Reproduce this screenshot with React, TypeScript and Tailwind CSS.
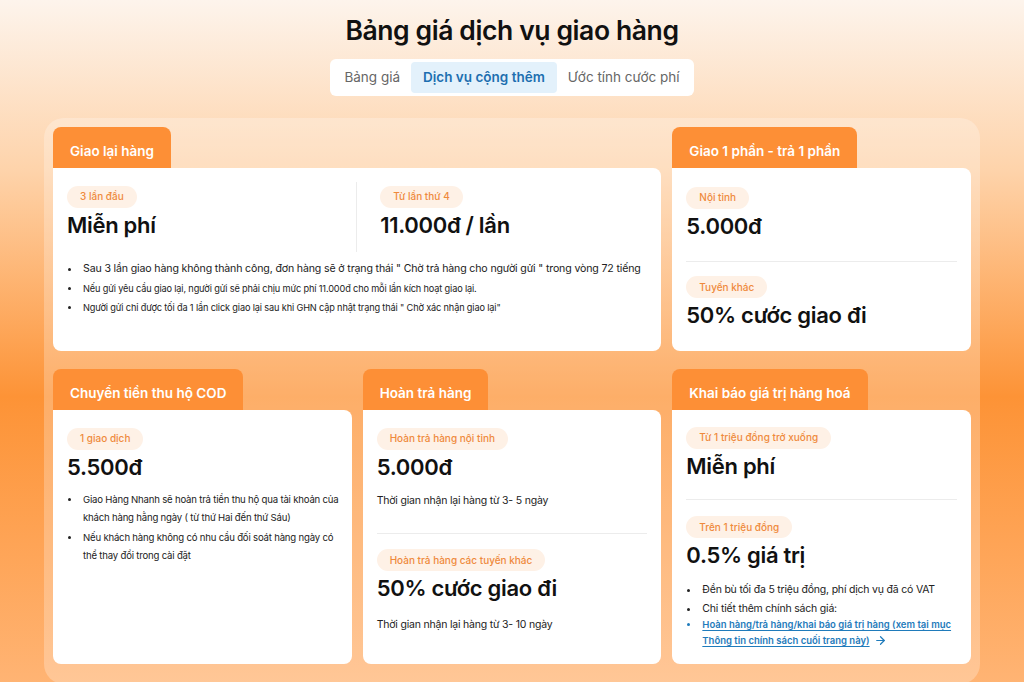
import { ArrowRight } from 'lucide-react';

const font = { fontFamily: 'Inter, "Noto Sans", sans-serif' };

function Badge({ children }: { children: React.ReactNode }) {
  return (
    <span className="inline-flex h-[22px] items-center rounded-full bg-[#fef1e6] px-[13px] text-[10px] font-medium text-[#ef8a3c]">
      {children}
    </span>
  );
}

function Price({ children }: { children: React.ReactNode }) {
  return (
    <div className="mt-[2px] text-[22px] font-semibold leading-[30px] tracking-[-0.3px] text-[#111]">
      {children}
    </div>
  );
}

function Card({
  title,
  className = '',
  bodyClass = '',
  children,
}: {
  title: string;
  className?: string;
  bodyClass?: string;
  children: React.ReactNode;
}) {
  return (
    <div className={`flex flex-col ${className}`}>
      <div className="flex">
        <div className="flex h-[41px] items-end rounded-t-[8px] bg-[#fd8f36] px-[17px] pb-[7px] text-[13.5px] font-semibold text-white">
          {title}
        </div>
      </div>
      <div className={`rounded-b-[8px] rounded-tr-[8px] bg-white px-[14px] ${bodyClass}`}>{children}</div>
    </div>
  );
}

export default function App() {
  return (
    <div
      className="min-h-[682px] w-full overflow-hidden bg-[linear-gradient(180deg,#fdf4ec_0%,#fed3aa_25%,#fd9336_58%,#ffb474_100%)]"
      style={font}
    >
      <div className="flex flex-col items-center pt-[11px]">
        <h1 className="text-[26.5px] font-semibold leading-[38px] tracking-[-0.4px] text-[#111]">
          Bảng giá dịch vụ giao hàng
        </h1>
        <div className="mt-[10px] flex h-[37px] items-center rounded-[6px] bg-white px-[3px] text-[13.5px]">
          <div className="px-[11px] text-[#666]">Bảng giá</div>
          <div className="flex h-[31px] items-center rounded-[4px] bg-[#e3f1fb] px-[12px] font-semibold text-[#1d6fb0]">
            Dịch vụ cộng thêm
          </div>
          <div className="px-[11px] text-[#666]">Ước tính cước phí</div>
        </div>
      </div>

      <div className="mx-[44px] mt-[22px] rounded-[20px] bg-white/25 p-[9px] pb-[20px]">
        <div className="grid grid-cols-3 gap-x-[11px] gap-y-[18px]">
          <Card title="Giao lại hàng" className="col-span-2" bodyClass="h-[183px] pt-[14px]">
            <div className="grid grid-cols-2">
              <div className="border-r border-[#ececec] pb-[12px]">
                <Badge>3 lần đầu</Badge>
                <Price>Miễn phí</Price>
              </div>
              <div className="pl-[23px]">
                <Badge>Từ lần thứ 4</Badge>
                <Price>11.000đ / lần</Price>
              </div>
            </div>
            <ul className="mt-[7px] list-disc pl-[14px] text-[#222]">
              <li className="whitespace-nowrap pl-[2px] text-[10.6px] leading-[20px] tracking-[-0.15px]">
                Sau 3 lần giao hàng không thành công, đơn hàng sẽ ở trạng thái " Chờ trả hàng cho người gửi " trong vòng 72 tiếng
              </li>
              <li className="pl-[2px] text-[9.2px] leading-[19px] tracking-[-0.15px]">
                Nếu gửi yêu cầu giao lại, người gửi sẽ phải chịu mức phí 11.000đ cho mỗi lần kích hoạt giao lại.
              </li>
              <li className="pl-[2px] text-[9.2px] leading-[19px] tracking-[-0.15px]">
                Người gửi chỉ được tối đa 1 lần click giao lại sau khi GHN cập nhật trạng thái " Chờ xác nhận giao lại"
              </li>
            </ul>
          </Card>

          <Card title="Giao 1 phần - trả 1 phần" bodyClass="h-[183px] pt-[15px]">
            <Badge>Nội tỉnh</Badge>
            <Price>5.000đ</Price>
            <div className="mt-[20px] border-t border-[#ececec]" />
            <div className="mt-[11px]">
              <Badge>Tuyến khác</Badge>
            </div>
            <Price>50% cước giao đi</Price>
          </Card>

          <Card title="Chuyển tiền thu hộ COD" bodyClass="h-[254px] pt-[14px]">
            <Badge>1 giao dịch</Badge>
            <Price>5.500đ</Price>
            <ul className="mt-[9px] list-disc whitespace-nowrap pl-[14px] text-[9.6px] leading-[18px] tracking-[-0.2px] text-[#222]">
              <li className="pl-[2px]">
                Giao Hàng Nhanh sẽ hoàn trả tiền thu hộ qua tài khoản của
                <br />
                khách hàng hằng ngày ( từ thứ Hai đến thứ Sáu)
              </li>
              <li className="mt-[2px] pl-[2px]">
                Nếu khách hàng không có nhu cầu đối soát hàng ngày có
                <br />
                thể thay đổi trong cài đặt
              </li>
            </ul>
          </Card>

          <Card title="Hoàn trả hàng" bodyClass="h-[254px] pt-[14px]">
            <Badge>Hoàn trả hàng nội tỉnh</Badge>
            <Price>5.000đ</Price>
            <div className="mt-[11px] text-[10.5px] leading-[16px] tracking-[-0.2px] text-[#222]">
              Thời gian nhận lại hàng từ 3- 5 ngày
            </div>
            <div className="mt-[24px] border-t border-[#ececec]" />
            <div className="mt-[12px]">
              <Badge>Hoàn trả hàng các tuyến khác</Badge>
            </div>
            <Price>50% cước giao đi</Price>
            <div className="mt-[14px] text-[10.5px] leading-[16px] tracking-[-0.2px] text-[#222]">
              Thời gian nhận lại hàng từ 3- 10 ngày
            </div>
          </Card>

          <Card title="Khai báo giá trị hàng hoá" bodyClass="h-[254px] pt-[13px] pr-[14px]">
            <Badge>Từ 1 triệu đồng trở xuống</Badge>
            <Price>Miễn phí</Price>
            <div className="mt-[18px] border-t border-[#ececec]" />
            <div className="mt-[13px]">
              <Badge>Trên 1 triệu đồng</Badge>
            </div>
            <Price>0.5% giá trị</Price>
            <ul className="mt-[10px] list-disc pl-[14px] text-[10.5px] leading-[20px] tracking-[-0.2px] text-[#222]">
              <li className="pl-[2px]">Đền bù tối đa 5 triệu đồng, phí dịch vụ đã có VAT</li>
              <li className="pl-[2px] leading-[17px]">Chi tiết thêm chính sách giá:</li>
              <li className="pl-[2px] text-[9.5px] font-semibold leading-[16px] tracking-normal text-[#1f7bbb] marker:text-[#1f7bbb]">
                <span className="underline underline-offset-2">
                  Hoàn hàng/trả hàng/khai báo giá trị hàng (xem tại mục Thông tin chính sách cuối trang này)
                </span>
                <ArrowRight className="ml-[4px] inline h-[13px] w-[13px] align-[-3px]" strokeWidth={2.2} />
              </li>
            </ul>
          </Card>
        </div>
      </div>
    </div>
  );
}
